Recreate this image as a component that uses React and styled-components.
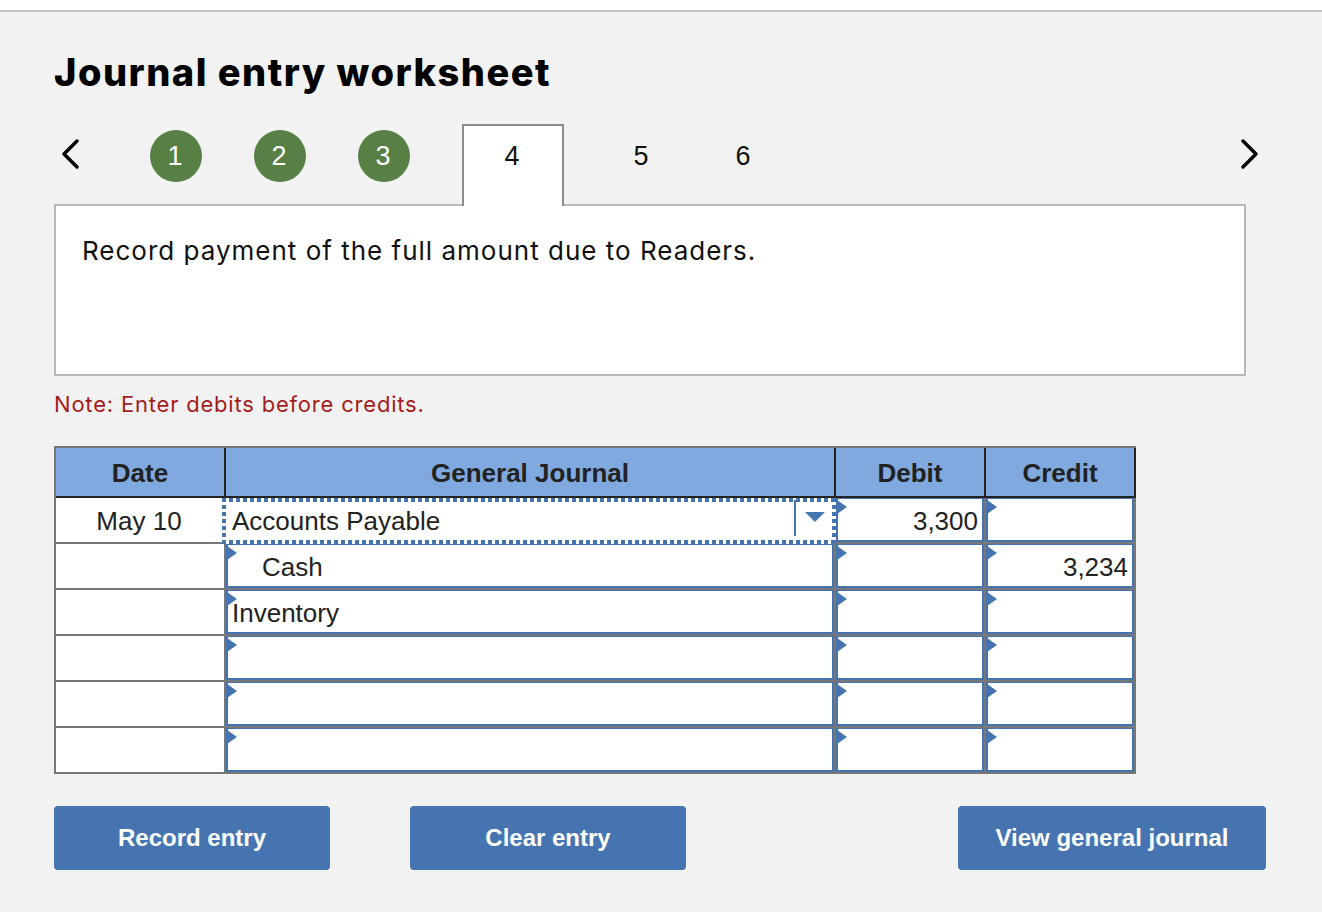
import React from 'react';
import styled, { createGlobalStyle } from 'styled-components';

const Global = createGlobalStyle`
  html, body { margin: 0; padding: 0; background: #fff; }
  body { font-family: "Liberation Sans", Arial, sans-serif; }
`;

const Page = styled.div`
  width: 1322px;
  height: 902px;
  box-sizing: border-box;
  margin-top: 10px;
  border-top: 2px solid #c8c8c8;
  background: #f2f2f2;
  padding: 0 56px 0 54px;
  overflow: hidden;
`;

const Title = styled.h1`
  margin: 35px 0 0;
  height: 50px;
  font: 800 38px/50px Inter, sans-serif;
  letter-spacing: 1.5px;
  color: #000;
`;

const StepRow = styled.div`
  display: flex;
  align-items: flex-start;
  height: 82px;
  margin-top: 27px;
  position: relative;
  z-index: 1;
`;

const Arrow = styled.svg`
  width: 18px;
  height: 30px;
  flex: none;
  margin: 15px ${({ $right }) => ($right ? '7px' : '0')} 0 ${({ $right }) => ($right ? '0' : '7px')};
  fill: none;
  stroke: #000;
  stroke-width: 3.4;
  stroke-linecap: round;
  stroke-linejoin: round;
`;

const Steps = styled.div`
  display: flex;
  align-items: flex-start;
  height: 100%;
  flex: 1;
  padding-left: 71px;
`;

const DoneStep = styled.div`
  width: 52px;
  height: 52px;
  margin: 6px 52px 0 0;
  border-radius: 50%;
  background: #588044;
  color: #fff;
  font-size: 27px;
  line-height: 52px;
  text-align: center;
  text-indent: -2px;
`;

const ActiveStep = styled.div`
  width: 102px;
  height: 82px;
  box-sizing: border-box;
  border: 2px solid #8c8c8c;
  border-bottom: none;
  background: #fff;
  font-size: 27px;
  line-height: 60px;
  text-align: center;
  text-indent: -2px;
  color: #111;
  margin-right: 26px;
`;

const Step = styled.div`
  width: 102px;
  font-size: 27px;
  line-height: 64px;
  text-align: center;
  color: #111;
`;

const Prompt = styled.div`
  box-sizing: border-box;
  width: 1192px;
  height: 172px;
  margin-top: -2px;
  padding: 28px 26px;
  border: 2px solid #b9b9b9;
  background: #fff;
  font: 400 26px/34px Inter, sans-serif;
  letter-spacing: 1px;
  color: #111;
`;

const Note = styled.p`
  margin: 13px 0 0;
  height: 30px;
  font: 400 22px/30px Inter, sans-serif;
  letter-spacing: 0.8px;
  color: #a51c1c;
`;

const Sheet = styled.div`
  width: 1078px;
  margin-top: 27px;
  border: 2px solid #777;
  background: #777;
  display: grid;
  grid-template-columns: 170px 610px 150px 148px;
  grid-template-rows: 50px repeat(5, 46px) 44px;
`;

const Head = styled.div`
  box-sizing: border-box;
  background: #7fa9df;
  border-bottom: 2px solid #222;
  border-right: 2px solid #222;
  margin-right: ${({ $last }) => ($last ? '-2px' : '0')};
  font-size: 26px;
  font-weight: 700;
  line-height: 50px;
  text-align: center;
  color: #222;
`;

const DateCell = styled.div`
  background: #fff;
  margin: 0 2px ${({ $end }) => ($end ? '0' : '2px')} 0;
  font-size: 26px;
  line-height: 46px;
  text-align: center;
  text-indent: -2px;
  color: #222;
`;

const EntryCell = styled.div`
  position: relative;
  box-sizing: border-box;
  background: #fff;
  border: 2px solid #4674b1;
  border-top-width: 1px;
  margin: 0 ${({ $end }) => ($end ? '0' : '2px')} ${({ $bottom }) => ($bottom ? '0' : '2px')} 0;
  font-size: 26px;
  line-height: 45px;
  color: #222;
  padding: 0 4px 0 ${({ $indent }) => $indent || 4}px;
  text-align: ${({ $right }) => ($right ? 'right' : 'left')};
  white-space: nowrap;

  &::before {
    content: '';
    position: absolute;
    left: -1px;
    top: 1px;
    border-left: 10px solid #4674b1;
    border-top: 7px solid transparent;
    border-bottom: 7px solid transparent;
  }
`;

const FocusCell = styled.div`
  position: relative;
  background-color: #fff;
  margin-left: -4px;
  height: 46px;
  box-sizing: border-box;
  padding-left: 10px;
  font-size: 26px;
  line-height: 46px;
  color: #222;
  z-index: 1;
  background-image:
    repeating-linear-gradient(90deg, #4674b1 0 4px, transparent 4px 7px),
    repeating-linear-gradient(90deg, #4674b1 0 4px, transparent 4px 7px),
    repeating-linear-gradient(0deg, #4674b1 0 4px, transparent 4px 7px),
    repeating-linear-gradient(0deg, #4674b1 0 4px, transparent 4px 7px);
  background-size: 100% 4px, 100% 4px, 4px 100%, 4px 100%;
  background-position: 0 0, 0 100%, 0 0, 100% 0;
  background-repeat: no-repeat;
`;

const Caret = styled.span`
  position: absolute;
  right: 40px;
  top: 2px;
  width: 0;
  height: 36px;
  border-left: 2px solid #4674b1;
  &::after {
    content: '';
    position: absolute;
    left: 9px;
    top: 12px;
    border-top: 10px solid #4674b1;
    border-left: 10px solid transparent;
    border-right: 10px solid transparent;
  }
`;

const Actions = styled.div`
  display: flex;
  margin-top: 32px;
  width: 1212px;
`;

const Action = styled.button`
  width: ${({ $wide }) => ($wide ? 308 : 276)}px;
  height: 64px;
  margin: ${({ $wide }) => ($wide ? '0 0 0 auto' : '0 80px 0 0')};
  border: none;
  border-radius: 4px;
  background: #4674b1;
  color: #fff;
  font: 700 24px "Liberation Sans", Arial, sans-serif;
`;

const rows = [
  { date: 'May 10', account: 'Accounts Payable', debit: '3,300', focus: true },
  { account: 'Cash', indent: 34, credit: '3,234' },
  { account: 'Inventory' },
  {},
  {},
  {},
];

export default function App() {
  return (
    <Page>
      <Global />
      <Title>Journal entry worksheet</Title>
      <StepRow>
        <Arrow viewBox="0 0 18 30"><path d="M16 2 L3 15 L16 28" /></Arrow>
        <Steps>
          <DoneStep>1</DoneStep>
          <DoneStep>2</DoneStep>
          <DoneStep>3</DoneStep>
          <ActiveStep>4</ActiveStep>
          <Step>5</Step>
          <Step>6</Step>
        </Steps>
        <Arrow $right viewBox="0 0 18 30"><path d="M2 2 L15 15 L2 28" /></Arrow>
      </StepRow>
      <Prompt>Record payment of the full amount due to Readers.</Prompt>
      <Note>Note: Enter debits before credits.</Note>
      <Sheet>
        <Head>Date</Head>
        <Head>General Journal</Head>
        <Head>Debit</Head>
        <Head $last>Credit</Head>
        {rows.map((row, i) => {
          const bottom = i === rows.length - 1;
          return (
            <React.Fragment key={i}>
              <DateCell $end={bottom}>{row.date}</DateCell>
              {row.focus ? (
                <FocusCell>
                  {row.account}
                  <Caret />
                </FocusCell>
              ) : (
                <EntryCell $indent={row.indent} $bottom={bottom}>{row.account}</EntryCell>
              )}
              <EntryCell $right $bottom={bottom}>{row.debit}</EntryCell>
              <EntryCell $right $end $bottom={bottom}>{row.credit}</EntryCell>
            </React.Fragment>
          );
        })}
      </Sheet>
      <Actions>
        <Action>Record entry</Action>
        <Action>Clear entry</Action>
        <Action $wide>View general journal</Action>
      </Actions>
    </Page>
  );
}
